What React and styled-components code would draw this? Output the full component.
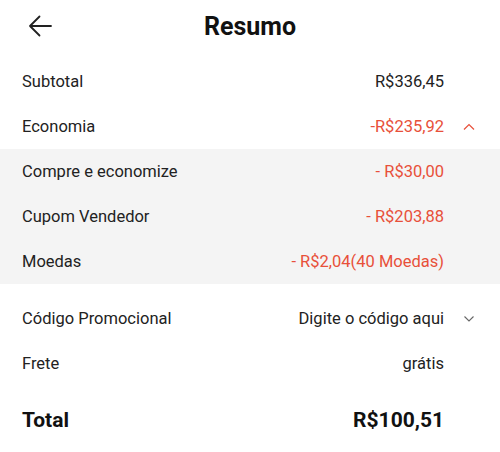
import styled, { createGlobalStyle } from "styled-components";

const GlobalStyle = createGlobalStyle`
  body {
    margin: 0;
    background: #ffffff;
    font-family: Roboto, "Liberation Sans", sans-serif;
    color: #222222;
  }
`;

const RED = "#e8503a";

export default function App() {
  return (
    <Page>
      <GlobalStyle />
      <Header>
        <BackButton type="button" aria-label="Voltar">
          <svg width="24" height="22" viewBox="0 0 24 22" fill="none">
            <path
              d="M23 11H2M11.5 1.5L2 11l9.5 9.5"
              stroke="#222"
              strokeWidth="1.8"
              strokeLinecap="round"
              strokeLinejoin="round"
            />
          </svg>
        </BackButton>
        <Title>Resumo</Title>
        <span />
      </Header>

      <Section>
        <Row>
          <Label>Subtotal</Label>
          <Value>R$336,45</Value>
          <Icon />
        </Row>
        <Row>
          <Label>Economia</Label>
          <Value $red>-R$235,92</Value>
          <Icon>
            <svg width="12" height="8" viewBox="0 0 12 8" fill="none">
              <path d="M1 6.5L6 1.5l5 5" stroke={RED} strokeWidth="1.2" />
            </svg>
          </Icon>
        </Row>
      </Section>

      <Band>
        <Row>
          <Label>Compre e economize</Label>
          <Value $red>- R$30,00</Value>
          <Icon />
        </Row>
        <Row>
          <Label>Cupom Vendedor</Label>
          <Value $red>- R$203,88</Value>
          <Icon />
        </Row>
        <Row>
          <Label>Moedas</Label>
          <Value $red>- R$2,04(40 Moedas)</Value>
          <Icon />
        </Row>
      </Band>

      <Section $top={12}>
        <Row>
          <Label>Código Promocional</Label>
          <Value>Digite o código aqui</Value>
          <Icon>
            <svg width="12" height="8" viewBox="0 0 12 8" fill="none">
              <path d="M1.5 1.5l4.5 4.5 4.5-4.5" stroke="#666" strokeWidth="1.1" />
            </svg>
          </Icon>
        </Row>
        <Row>
          <Label>Frete</Label>
          <Value>grátis</Value>
          <Icon />
        </Row>
        <TotalRow>
          <TotalText>Total</TotalText>
          <TotalText $right>R$100,51</TotalText>
          <Icon />
        </TotalRow>
      </Section>
    </Page>
  );
}

const Page = styled.div`
  width: 500px;
  height: 452px;
  background: #ffffff;
  overflow: hidden;
`;

const Header = styled.header`
  display: grid;
  grid-template-columns: 1fr auto 1fr;
  align-items: center;
  height: 52px;
  margin-bottom: 7px;
`;

const BackButton = styled.button`
  justify-self: start;
  display: flex;
  align-items: center;
  background: none;
  border: none;
  padding: 0 0 0 28px;
  cursor: pointer;
`;

const Title = styled.h1`
  margin: 0;
  font-size: 25px;
  font-weight: 700;
  color: #111;
`;

const Section = styled.div`
  padding-top: ${(p) => p.$top || 0}px;
`;

const Band = styled.div`
  background: #f4f4f4;
`;

const Row = styled.div`
  display: grid;
  grid-template-columns: 1fr auto 34px;
  align-items: center;
  height: 45px;
  padding: 0 22px;
  font-size: 16.5px;
`;

const Label = styled.span`
  color: #222;
`;

const Value = styled.span`
  text-align: right;
  color: ${(p) => (p.$red ? RED : "#222")};
`;

const Icon = styled.span`
  display: flex;
  justify-content: flex-end;
  align-items: center;
  padding-right: 3px;
`;

const TotalRow = styled(Row)`
  height: 50px;
  margin-top: 9px;
`;

const TotalText = styled.span`
  font-size: 21px;
  font-weight: 700;
  color: #111;
  text-align: ${(p) => (p.$right ? "right" : "left")};
`;
